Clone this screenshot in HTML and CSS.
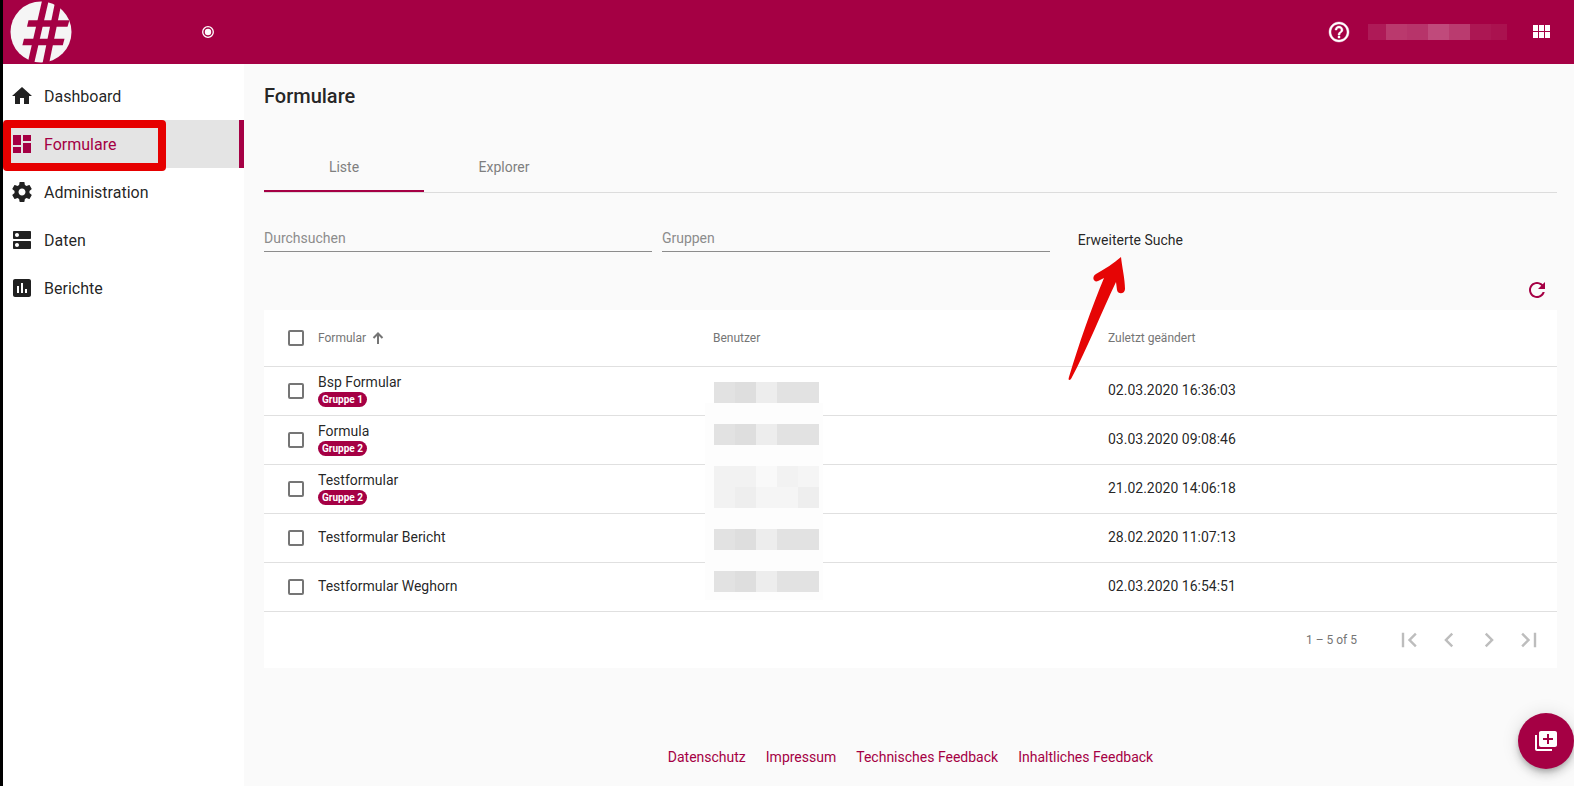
FILE: index.html
```html
<!DOCTYPE html>
<html lang="de">
<head>
<meta charset="utf-8">
<meta name="viewport" content="width=device-width, initial-scale=1">
<title>Formulare</title>
<link rel="stylesheet" href="styles.css">
</head>
<body class="app">
<header class="topbar">
  <a class="logo" href="#" aria-label="Startseite">
    <svg viewBox="0 0 62 62" width="62" height="62">
      <circle cx="31" cy="31" r="30.500" fill="#f5f5f5"/>
      <g fill="#a50044">
        <path d="M32.200 -1H38.800L24 63H17.400z"/>
        <path d="M45.500 -1H52.100L39 63H32.400z"/>
        <path d="M18.500 19.300H59.500L57.500 25.700H17z"/>
        <path d="M14 37.800H54.500L52.800 44.200H12.400z"/>
      </g>
    </svg>
  </a>
  <button class="icon-btn pin" type="button" aria-label="Menü fixieren">
    <svg viewBox="0 0 14 14" width="14" height="14"><circle cx="7" cy="7" r="5.300" fill="none" stroke="#fff" stroke-width="1.300"/><circle cx="7" cy="7" r="3.200" fill="#fff"/></svg>
  </button>
  <div class="topbar-tools">
    <button class="icon-btn" type="button" aria-label="Hilfe">
      <svg class="icon help" viewBox="0 0 24 24"><path d="M11 18h2v-2h-2v2zm1-16C6.480 2 2 6.480 2 12s4.480 10 10 10 10-4.480 10-10S17.520 2 12 2zm0 18c-4.410 0-8-3.590-8-8s3.590-8 8-8 8 3.590 8 8-3.590 8-8 8zm0-14c-2.210 0-4 1.790-4 4h2c0-1.100.9-2 2-2s2 .9 2 2c0 2-3 1.750-3 5h2c0-2.250 3-2.500 3-5 0-2.210-1.790-4-4-4z"/></svg>
    </button>
    <svg class="account" viewBox="0 0 139 16" width="139" height="16" aria-hidden="true">
      <path fill="#ae1a57" d="M0 0h18v16H0z"/><path fill="#ba396d" d="M18 0h21v16H18z"/><path fill="#b7346a" d="M39 0h21v16H39z"/><path fill="#c04a7b" d="M60 0h21v16H60z"/><path fill="#ba3b6f" d="M81 0h21v16H81z"/><path fill="#ac1753" d="M102 0h21v16h-21z"/><path fill="#aa124f" d="M123 0h16v16h-16z"/>
    </svg>
    <button class="icon-btn" type="button" aria-label="Module">
      <svg class="icon" viewBox="0 0 24 24"><path d="M4 11h5V5H4v6zm0 7h5v-6H4v6zm6 0h5v-6h-5v6zm6 0h5v-6h-5v6zm-6-7h5V5h-5v6zm6-6v6h5V5h-5z"/></svg>
    </button>
  </div>
</header>

<div class="shell">
  <nav class="sidebar">
    <a class="nav-item" href="#"><svg class="icon" viewBox="0 0 24 24"><path d="M10 20v-6h4v6h5v-8h3L12 3 2 12h3v8z"/></svg><span class="nav-label">Dashboard</span></a>
    <a class="nav-item active" href="#"><svg class="icon" viewBox="0 0 24 24"><path d="M3 13h8V3H3v10zm0 8h8v-6H3v6zm10 0h8V11h-8v10zm0-18v6h8V3h-8z"/></svg><span class="nav-label">Formulare</span><span class="marker"></span></a>
    <a class="nav-item" href="#"><svg class="icon" viewBox="0 0 24 24"><path d="M19.430 12.980c.04-.32.07-.64.07-.98s-.03-.66-.07-.98l2.110-1.650c.19-.15.24-.42.12-.64l-2-3.460c-.12-.22-.39-.3-.61-.22l-2.490 1c-.52-.4-1.080-.73-1.690-.98l-.38-2.650C14.460 2.180 14.250 2 14 2h-4c-.25 0-.46.18-.49.42l-.38 2.650c-.61.25-1.170.59-1.690.98l-2.490-1c-.23-.09-.49 0-.61.22l-2 3.460c-.13.22-.07.49.12.64l2.110 1.650c-.04.32-.07.65-.07.98s.03.66.07.98l-2.110 1.650c-.19.15-.24.42-.12.64l2 3.460c.12.22.39.3.61.22l2.490-1c.52.4 1.080.73 1.690.98l.38 2.650c.03.24.24.42.49.42h4c.25 0 .46-.18.49-.42l.38-2.650c.61-.25 1.170-.59 1.690-.98l2.490 1c.23.09.49 0 .61-.22l2-3.460c.12-.22.07-.49-.12-.64l-2.110-1.650zM12 15.500c-1.930 0-3.500-1.570-3.500-3.500s1.570-3.500 3.500-3.500 3.500 1.570 3.500 3.500-1.570 3.500-3.500 3.500z"/></svg><span class="nav-label">Administration</span></a>
    <a class="nav-item" href="#"><svg class="icon" viewBox="0 0 24 24"><path d="M20 13H4c-.55 0-1 .45-1 1v6c0 .55.45 1 1 1h16c.55 0 1-.45 1-1v-6c0-.55-.45-1-1-1zM7 19c-1.100 0-2-.9-2-2s.9-2 2-2 2 .9 2 2-.9 2-2 2zM20 3H4c-.55 0-1 .45-1 1v6c0 .55.45 1 1 1h16c.55 0 1-.45 1-1V4c0-.55-.45-1-1-1zM7 9c-1.100 0-2-.9-2-2s.9-2 2-2 2 .9 2 2-.9 2-2 2z"/></svg><span class="nav-label">Daten</span></a>
    <a class="nav-item" href="#"><svg class="icon" viewBox="0 0 24 24"><path d="M19 3H5c-1.100 0-2 .9-2 2v14c0 1.100.9 2 2 2h14c1.100 0 2-.9 2-2V5c0-1.100-.9-2-2-2zM9 17H7v-7h2v7zm4 0h-2V7h2v10zm4 0h-2v-4h2v4z"/></svg><span class="nav-label">Berichte</span></a>
  </nav>

  <main class="content">
    <h1 class="title">Formulare</h1>
    <div class="tabs" role="tablist">
      <button class="tab selected" type="button" role="tab" aria-selected="true">Liste</button>
      <button class="tab" type="button" role="tab" aria-selected="false">Explorer</button>
    </div>

    <form class="filters">
      <input class="field" type="text" placeholder="Durchsuchen" aria-label="Durchsuchen">
      <input class="field" type="text" placeholder="Gruppen" aria-label="Gruppen">
      <div class="advanced">
        <button class="text-btn" type="button">Erweiterte Suche</button>
        <svg class="arrow" viewBox="0 0 60 128" width="60" height="128" aria-hidden="true">
          <path fill="#e60505" d="M53 2C54 12 57 24 57 34C57 39 50 40 49 35L48 27C34 56 19 94 3 124C1 126 0 125 1 122C11 89 23 54 36 23L30 26C26 28 23 22 28 19C37 14 46 8 53 2Z"/>
        </svg>
      </div>
    </form>

    <div class="actions">
      <button class="icon-btn refresh" type="button" aria-label="Aktualisieren">
        <svg class="icon" viewBox="0 0 24 24"><path d="M17.650 6.350C16.200 4.900 14.210 4 12 4c-4.420 0-7.990 3.580-7.990 8s3.570 8 7.990 8c3.730 0 6.840-2.550 7.730-6h-2.080c-.82 2.330-3.040 4-5.650 4-3.310 0-6-2.690-6-6s2.690-6 6-6c1.660 0 3.140.69 4.220 1.780L13 11h7V4l-2.350 2.350z"/></svg>
      </button>
    </div>

    <section class="card">
      <table class="grid">
        <colgroup><col class="col-check"><col><col><col><col class="col-end"></colgroup>
        <thead>
          <tr><th class="check"><input class="box" type="checkbox" aria-label="Alle auswählen"></th>
            <th><span class="sort">Formular<svg viewBox="0 0 12 12" width="12" height="12"><path d="M6 12V2M1.500 6L6 1.500L10.500 6" fill="none" stroke="#757575" stroke-width="2"/></svg></span></th>
            <th>Benutzer</th><th>Zuletzt geändert</th><th></th></tr>
        </thead>
        <tbody>
          <tr><td class="check"><input class="box" type="checkbox" aria-label="Bsp Formular"></td><td>Bsp Formular<span class="badge">Gruppe 1</span></td><td></td><td>02.03.2020 16:36:03</td><td></td></tr>
          <tr><td class="check"><input class="box" type="checkbox" aria-label="Formula"></td><td>Formula<span class="badge">Gruppe 2</span></td><td></td><td>03.03.2020 09:08:46</td><td></td></tr>
          <tr><td class="check"><input class="box" type="checkbox" aria-label="Testformular"></td><td>Testformular<span class="badge">Gruppe 2</span></td><td></td><td>21.02.2020 14:06:18</td><td></td></tr>
          <tr><td class="check"><input class="box" type="checkbox" aria-label="Testformular Bericht"></td><td>Testformular Bericht</td><td></td><td>28.02.2020 11:07:13</td><td></td></tr>
          <tr><td class="check"><input class="box" type="checkbox" aria-label="Testformular Weghorn"></td><td>Testformular Weghorn</td><td class="users">
            <svg class="mosaic" viewBox="0 0 118 221" width="118" height="221" aria-hidden="true">
              <path fill="#fdfdfd" d="M0 24h118v197H0z"/>
              <g id="strip"><path fill="#e2e2e2" d="M9 3h105v21H9z"/><path fill="#dedede" d="M30 3h21v21H30z"/><path fill="#ededed" d="M51 3h21v21H51z"/></g>
              <use href="#strip" y="42"/><use href="#strip" y="147"/><use href="#strip" y="189"/>
              <path fill="#f2f2f2" d="M9 87h105v42H9z"/><path fill="#f9f9f9" d="M51 87h21v21H51z"/><path fill="#f5f5f5" d="M93 87h21v21H93zM51 108h42v21H51z"/><path fill="#eee" d="M30 108h21v21H30zM93 108h21v21H93z"/>
            </svg></td><td>02.03.2020 16:54:51</td><td></td></tr>
        </tbody>
      </table>
      <div class="paginator">
        <span class="range">1 – 5 of 5</span>
        <button class="icon-btn" type="button" disabled aria-label="Erste Seite"><svg class="icon page" viewBox="0 0 24 24"><path d="M18.410 16.590L13.820 12l4.590-4.590L17 6l-6 6 6 6zM6 6h2v12H6z" transform="translate(-2.400 -2.400) scale(1.200)"/></svg></button>
        <button class="icon-btn" type="button" disabled aria-label="Vorherige Seite"><svg class="icon page" viewBox="0 0 24 24"><path d="M15.410 7.410L14 6l-6 6 6 6 1.410-1.410L10.830 12z" transform="translate(-2.400 -2.400) scale(1.200)"/></svg></button>
        <button class="icon-btn" type="button" disabled aria-label="Nächste Seite"><svg class="icon page" viewBox="0 0 24 24"><path d="M10 6L8.590 7.410 13.170 12l-4.580 4.590L10 18l6-6z" transform="translate(-2.400 -2.400) scale(1.200)"/></svg></button>
        <button class="icon-btn" type="button" disabled aria-label="Letzte Seite"><svg class="icon page" viewBox="0 0 24 24"><path d="M5.590 7.410L10.180 12l-4.590 4.590L7 18l6-6-6-6zM16 6h2v12h-2z" transform="translate(-2.400 -2.400) scale(1.200)"/></svg></button>
      </div>
    </section>

    <footer class="footer">
      <a href="#">Datenschutz</a><a href="#">Impressum</a><a href="#">Technisches Feedback</a><a href="#">Inhaltliches Feedback</a>
    </footer>
  </main>
</div>

<button class="fab" type="button" aria-label="Formular hinzufügen">
  <svg class="icon" viewBox="0 0 24 24"><path d="M3 6H1v14c0 1.100.9 2 2 2h15v-2H3V6zm18-4H7c-1.100 0-2 .9-2 2v12c0 1.100.9 2 2 2h14c1.100 0 2-.9 2-2V4c0-1.100-.9-2-2-2zm-2 9h-4v4h-2v-4H9V9h4V5h2v4h4v2z"/></svg>
</button>
</body>
</html>
```
FILE: styles.css
```css
* { box-sizing: border-box; }

.app {
  margin: 0;
  min-height: 100vh;
  display: flex;
  flex-direction: column;
  border-left: 3px solid #000;
  background: #fafafa;
  color: rgba(0, 0, 0, .87);
  font: 14px/20px Roboto, sans-serif;
}

button, input { font: inherit; color: inherit; }
a { color: inherit; text-decoration: none; }
.icon { width: 24px; height: 24px; fill: currentColor; flex: none; }
.help { stroke: currentColor; stroke-width: .4; }

.icon-btn {
  display: flex;
  align-items: center;
  justify-content: center;
  width: 40px;
  height: 40px;
  padding: 0;
  border: 0;
  background: none;
}

.topbar {
  display: flex;
  align-items: center;
  height: 64px;
  padding: 0 13px 0 7px;
  background: #a50044;
  color: #fff;
}
.logo { display: flex; }
.pin { margin-left: 116px; }
.topbar-tools { display: flex; align-items: center; margin-left: auto; }
.account { margin: 0 14px 0 9px; }

.shell { display: flex; flex: 1; }

.sidebar { width: 241px; flex: none; padding-top: 8px; background: #fff; }
.nav-item {
  position: relative;
  display: flex;
  align-items: center;
  gap: 10px;
  height: 48px;
  padding-left: 7px;
  font-size: 16px;
}
.nav-label { padding-top: 2px; }
.nav-item.active { background: #e4e4e4; border-right: 5px solid #a50044; color: #a50044; }
.marker {
  position: absolute;
  left: 0;
  top: 0;
  width: 163px;
  height: 51px;
  border: 8px solid #e60000;
  border-radius: 4px;
}

.content { flex: 1; min-width: 0; padding: 16px 17px 0 20px; }
.title { margin: 0; font-size: 20px; line-height: 32px; font-weight: 500; }

.tabs { display: flex; margin-top: 31px; border-bottom: 1px solid #dcdcdc; }
.tab {
  width: 160px;
  height: 49px;
  padding: 0;
  border: 0;
  border-bottom: 2px solid transparent;
  background: none;
  color: #7f7f7f;
}
.tab.selected { border-bottom-color: #a50044; }

.filters { display: flex; gap: 10px; margin-top: 32px; }
.field {
  width: 30%;
  height: 27px;
  padding: 0;
  border: 0;
  border-bottom: 1px solid #8c8c8c;
  border-radius: 0;
  background: none;
}
.field::placeholder { color: #8c8c8c; opacity: 1; }
.advanced { position: relative; padding-left: 2px; }
.text-btn { padding: 5px 16px 0; border: 0; background: none; }
.arrow { position: absolute; left: 8px; top: 30px; }

.actions { display: flex; justify-content: flex-end; margin-top: 18px; }
.refresh { color: #a50044; }

.card { background: #fff; }
.grid { width: 100%; table-layout: fixed; border-collapse: collapse; }
.col-check, .col-end { width: 54px; }
.grid th, .grid td { padding: 0; text-align: left; border-bottom: 1px solid #e0e0e0; }
.grid th { height: 56px; font-size: 12px; font-weight: 400; color: #757575; }
.grid td { height: 49px; padding-bottom: 2px; }
.grid .check { padding: 0 0 0 24px; }
.sort { display: flex; align-items: center; gap: 6px; }
.box {
  display: block;
  appearance: none;
  width: 16px;
  height: 16px;
  margin: 0;
  border: 2px solid #757575;
  border-radius: 2px;
}
.badge {
  display: block;
  width: max-content;
  padding: 0 4px;
  border-radius: 8px;
  background: #a50044;
  color: #fff;
  font-size: 10px;
  line-height: 15px;
  font-weight: 700;
}
.users { position: relative; }
.mosaic { position: absolute; left: -8px; bottom: 11px; }

.paginator {
  display: flex;
  align-items: center;
  justify-content: flex-end;
  height: 56px;
  padding-right: 8px;
  font-size: 12px;
  color: #757575;
}
.range { margin-right: 32px; }
.page { color: #bdbdbd; }

.footer {
  display: flex;
  justify-content: center;
  gap: 20px;
  padding: 79px 0 19px;
  color: #a50044;
}

.fab {
  position: fixed;
  right: 0;
  bottom: 17px;
  display: flex;
  align-items: center;
  justify-content: center;
  width: 56px;
  height: 56px;
  padding: 0;
  border: 0;
  border-radius: 50%;
  background: #a50044;
  color: #fff;
  box-shadow: 0 3px 5px -1px rgba(0, 0, 0, .2), 0 6px 10px rgba(0, 0, 0, .14), 0 1px 18px rgba(0, 0, 0, .12);
}
```
